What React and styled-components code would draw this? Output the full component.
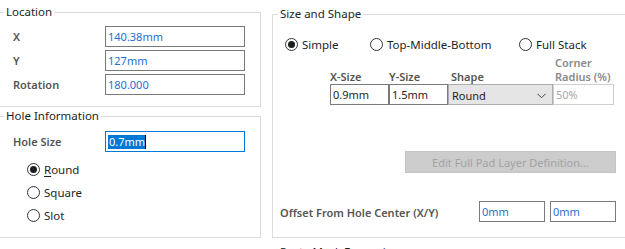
import React from "react";
import styled, { createGlobalStyle } from "styled-components";

const Global = createGlobalStyle`
  html, body {
    margin: 0;
    padding: 0;
    background: #fff;
    overflow: hidden;
  }
  body {
    font-family: "Noto Sans", "Open Sans", sans-serif;
    font-size: 11px;
    color: #1e1e1e;
  }
`;

const Page = styled.div`
  display: flex;
  align-items: flex-start;
  gap: 11px;
  width: 700px;
  height: 249px;
  padding-top: 4px;
  box-sizing: border-box;
`;

const Column = styled.div`
  display: flex;
  flex-direction: column;
  padding-top: ${(p) => p.$offset || 0}px;
  width: ${(p) => p.$width}px;
  flex: none;
`;

const Group = styled.fieldset`
  margin: ${(p) => p.$gap || 0}px 0 0 0;
  padding: 0;
  min-width: 0;
  border: 1px solid #dcdcdc;
  border-left: ${(p) => (p.$open ? "none" : "1px solid #dcdcdc")};
  box-sizing: border-box;
`;

const Legend = styled.legend`
  margin-left: ${(p) => p.$indent}px;
  padding: 0 2px;
  line-height: 16px;
  font-size: 11.5px;
  color: #1e1e1e;
`;

const Body = styled.div`
  display: flex;
  flex-direction: column;
  align-items: flex-start;
  padding: ${(p) => p.$pad};
`;

const FieldGrid = styled.div`
  display: grid;
  grid-template-columns: 92px 140px;
  grid-auto-rows: 21px;
  row-gap: 3px;
  align-items: center;
`;

const Label = styled.span`
  font-weight: 600;
  color: #555;
`;

const TextBox = styled.div`
  height: ${(p) => p.$h || 21}px;
  width: ${(p) => p.$w}px;
  box-sizing: border-box;
  border: 1px solid ${(p) => (p.$focus ? "#0078d7" : p.$dim ? "#cfcfcf" : "#7a7a7a")};
  background: #fff;
  display: flex;
  align-items: center;
  padding-left: 2px;
  color: ${(p) => (p.$dim ? "#a8a8a8" : p.$plain ? "#1e1e1e" : "#1f6fd1")};
  line-height: 14px;
`;

const Selected = styled.span`
  background: #0078d7;
  color: #fff;
  padding: 0 0 0 1px;
  border-right: 1px solid #000;
`;

const RadioList = styled.div`
  display: flex;
  flex-direction: ${(p) => (p.$row ? "row" : "column")};
  margin: ${(p) => p.$margin};
`;

const RadioItem = styled.label`
  display: flex;
  align-items: center;
  height: ${(p) => p.$h || 23}px;
  width: ${(p) => (p.$w ? `${p.$w}px` : "auto")};
  gap: 4px;
  color: #1e1e1e;
  flex: none;
  font-size: 11.5px;
`;

const Circle = styled.span`
  width: 13px;
  height: 13px;
  box-sizing: border-box;
  border: 1px solid #333;
  border-radius: 50%;
  background: #fff;
  display: flex;
  align-items: center;
  justify-content: center;
  flex: none;

  &::after {
    content: "";
    width: 7px;
    height: 7px;
    border-radius: 50%;
    background: #1e1e1e;
    display: ${(p) => (p.$on ? "block" : "none")};
  }
`;

const Key = styled.span`
  text-decoration: underline;
  text-underline-offset: 2px;
`;

const PadGrid = styled.div`
  display: grid;
  grid-template-columns: 59px 59px 105px 61px;
  margin-left: 50px;
`;

const Head = styled.div`
  height: 30px;
  display: flex;
  align-items: flex-end;
  font-weight: 600;
  color: ${(p) => (p.$dim ? "#8a8a8a" : "#555")};
  line-height: 14px;
  padding-left: ${(p) => p.$indent || 0}px;
  box-sizing: border-box;
  white-space: nowrap;
`;

const Select = styled.div`
  height: 21px;
  box-sizing: border-box;
  border: 1px solid #adadad;
  background: #e5e5e5;
  display: flex;
  align-items: center;
  justify-content: space-between;
  padding: 2px 6px 0 3px;
  color: #1e1e1e;
`;

const Button = styled.div`
  align-self: flex-end;
  width: 211px;
  height: 22px;
  margin-top: 46px;
  box-sizing: border-box;
  background: #cccccc;
  border: 1px solid #c4c4c4;
  color: #a3a3a3;
  display: flex;
  align-items: center;
  justify-content: center;
`;

const OffsetRow = styled.div`
  align-self: stretch;
  display: flex;
  align-items: center;
  gap: 5px;
  margin-top: 28px;
`;

const OffsetLabel = styled(Label)`
  flex: 1;
  padding-top: 2px;
`;

const Chevron = () => (
  <svg width="9" height="6" viewBox="0 0 9 6">
    <path d="M0.5 0.8 L4.5 4.8 L8.5 0.8" fill="none" stroke="#444" strokeWidth="1" />
  </svg>
);

const Radio = ({ on, w, h, children }) => (
  <RadioItem $w={w} $h={h}>
    <Circle $on={on} />
    <span>{children}</span>
  </RadioItem>
);

export default function App() {
  return (
    <>
      <Global />
      <Page>
        <Column $width={261}>
          <Group $open>
            <Legend $indent={4}>Location</Legend>
            <Body $pad="6px 0 11px 13px">
              <FieldGrid>
                <Label>X</Label>
                <TextBox $w={140}>140.38mm</TextBox>
                <Label>Y</Label>
                <TextBox $w={140}>127mm</TextBox>
                <Label>Rotation</Label>
                <TextBox $w={140}>180.000</TextBox>
              </FieldGrid>
            </Body>
          </Group>
          <Group $open $gap={1}>
            <Legend $indent={4}>Hole Information</Legend>
            <Body $pad="7px 0 10px 13px">
              <FieldGrid>
                <Label>Hole Size</Label>
                <TextBox $w={140} $focus>
                  <Selected>0.7mm</Selected>
                </TextBox>
              </FieldGrid>
              <RadioList $margin="6px 0 0 14px">
                <Radio on>
                  <Key>R</Key>ound
                </Radio>
                <Radio>Square</Radio>
                <Radio>Slot</Radio>
              </RadioList>
            </Body>
          </Group>
          <Group $open $gap={8}>
            <Legend $indent={4}>Properties</Legend>
            <Body $pad="8px 0 40px 13px" />
          </Group>
        </Column>

        <Column $width={360} $offset={2}>
          <Group>
            <Legend $indent={5}>Size and Shape</Legend>
            <Body $pad="12px 15px 15px 7px">
              <RadioList $row $margin="0 0 0 5px">
                <Radio on w={85} h={20}>Simple</Radio>
                <Radio w={149} h={20}>Top-Middle-Bottom</Radio>
                <Radio h={20}>Full Stack</Radio>
              </RadioList>
              <PadGrid>
                <Head>X-Size</Head>
                <Head $indent={-3}>Y-Size</Head>
                <Head $indent={3}>Shape</Head>
                <Head $dim $indent={2}>
                  Corner
                  <br />
                  Radius (%)
                </Head>
                <TextBox $plain>0.9mm</TextBox>
                <TextBox $plain>1.5mm</TextBox>
                <Select>
                  <span>Round</span>
                  <Chevron />
                </Select>
                <TextBox $dim>50%</TextBox>
              </PadGrid>
              <Button>Edit Full Pad Layer Definition...</Button>
              <OffsetRow>
                <OffsetLabel>Offset From Hole Center (X/Y)</OffsetLabel>
                <TextBox $w={66}>0mm</TextBox>
                <TextBox $w={66}>0mm</TextBox>
              </OffsetRow>
            </Body>
          </Group>
          <Group $gap={6}>
            <Legend $indent={5}>Paste Mask Expansion</Legend>
            <Body $pad="8px 0 40px 7px" />
          </Group>
        </Column>
      </Page>
    </>
  );
}
